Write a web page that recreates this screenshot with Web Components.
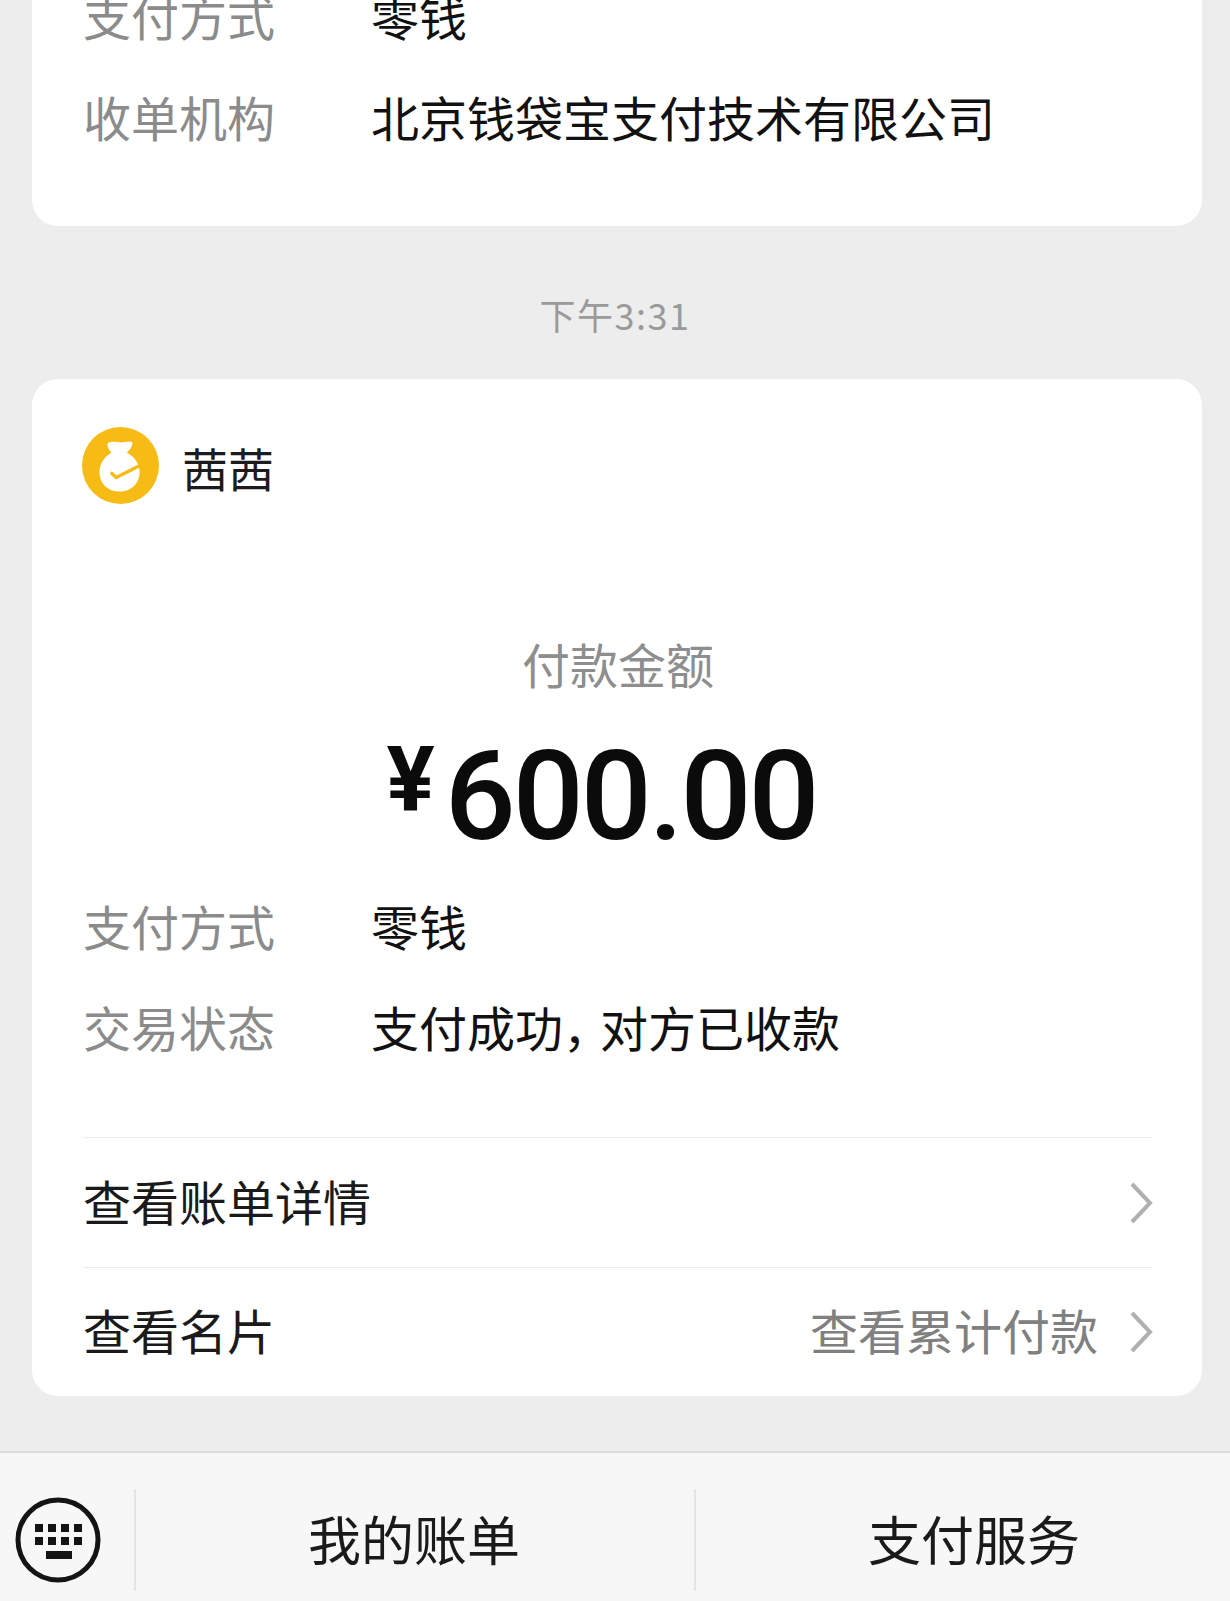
<!doctype html>
<html lang="zh">
<head>
<meta charset="utf-8">
<title>微信支付</title>
<style>
  html, body { margin: 0; padding: 0; background: #ededed; }
  body { font-family: "Noto Sans CJK SC", "Noto Sans", sans-serif; }
</style>
</head>
<body>
<pay-page>
  <pay-card style="margin-top:-33px;padding-bottom:57px">
    <info-row label="支付方式">零钱</info-row>
    <info-row label="收单机构">北京钱袋宝支付技术有限公司</info-row>
  </pay-card>
  <time-stamp>下午3:31</time-stamp>
  <pay-card>
    <payer-head name="茜茜"></payer-head>
    <pay-amount label="付款金额" value="600.00"></pay-amount>
    <info-row label="支付方式">零钱</info-row>
    <info-row label="交易状态">支付成功<span style="letter-spacing:-11px">，</span>对方已收款</info-row>
    <link-row style="margin-top:58px;--row-h:129px">查看账单详情</link-row>
    <link-row extra="查看累计付款" style="--row-h:128px">查看名片</link-row>
  </pay-card>
  <menu-bar>
    <menu-item>我的账单</menu-item>
    <menu-item>支付服务</menu-item>
  </menu-bar>
</pay-page>

<script>
class PayPage extends HTMLElement {
  constructor() {
    super()
    this.attachShadow({ mode: 'open' })
    this.shadowRoot.innerHTML = /*html*/ `
      <style>
        :host { display: flex; flex-direction: column; height: 1601px; overflow: hidden; background: #ededed; }
      </style>
      <slot></slot>
    `
  }
}

class PayCard extends HTMLElement {
  constructor() {
    super()
    this.attachShadow({ mode: 'open' })
    this.shadowRoot.innerHTML = /*html*/ `
      <style>
        :host { display: block; flex: none; margin: 0 28px 0 32px; padding: 0 49px 0 51px; background: #fff; border-radius: 26px; }
      </style>
      <slot></slot>
    `
  }
}

class InfoRow extends HTMLElement {
  constructor() {
    super()
    this.attachShadow({ mode: 'open' })
  }
  connectedCallback() {
    this.shadowRoot.innerHTML = /*html*/ `
      <style>
        :host { display: flex; align-items: center; height: 101px; padding-bottom: 6px; box-sizing: border-box; font-size: 48px; color: #111; }
        .label { flex: none; width: 288px; color: #8b8b8b; }
      </style>
      <span class="label">${this.getAttribute('label') ?? ''}</span>
      <span><slot></slot></span>
    `
  }
}

class TimeStamp extends HTMLElement {
  constructor() {
    super()
    this.attachShadow({ mode: 'open' })
    this.shadowRoot.innerHTML = /*html*/ `
      <style>
        :host { display: block; flex: none; height: 153px; padding-top: 62px; box-sizing: border-box; text-align: center; font-size: 36px; line-height: 52px; letter-spacing: 1.5px; color: #9a9a9a; }
      </style>
      <slot></slot>
    `
  }
}

class PayerHead extends HTMLElement {
  constructor() {
    super()
    this.attachShadow({ mode: 'open' })
  }
  connectedCallback() {
    this.shadowRoot.innerHTML = /*html*/ `
      <style>
        :host { display: flex; align-items: center; gap: 23px; padding-top: 48px; font-size: 46px; color: #1c1c1c; }
        svg { display: block; flex: none; margin-left: -1px; }
        span { position: relative; top: 1px; }
      </style>
      <svg width="77" height="77" viewBox="68 52 230 230">
        <circle cx="183" cy="167" r="115" fill="#f6bb14"/>
        <path fill="#fff" d="M145 100c12-7 30-2 40-2s22-6 33-1c3 10-6 22-16 32 24 12 38 34 38 58 0 34-26 58-60 58s-60-24-60-58c0-24 14-46 36-58-8-9-14-19-11-29z"/>
        <path fill="none" stroke="#f6bb14" stroke-width="10" stroke-linecap="round" stroke-linejoin="round" d="M157 190l13 13 65-33"/>
      </svg>
      <span>${this.getAttribute('name') ?? ''}</span>
    `
  }
}

class PayAmount extends HTMLElement {
  constructor() {
    super()
    this.attachShadow({ mode: 'open' })
  }
  connectedCallback() {
    this.shadowRoot.innerHTML = /*html*/ `
      <style>
        :host { display: block; padding-bottom: 15px; }
        .label { margin-top: 124px; height: 70px; line-height: 70px; text-align: center; font-size: 48px; color: #8e8e8e; padding-right: 0; }
        .sum { display: flex; justify-content: center; align-items: flex-start; height: 130px; margin-top: 34px; padding: 0 33px 0 0; font-family: Roboto, "Liberation Sans", sans-serif; font-weight: 500; color: #0b0b0b; }
        .yen { font-size: 90px; line-height: 90px; margin: 0 10px 0 0; font-weight: 700; position: relative; top: 4px; }
        .num { font-size: 125px; line-height: 130px; letter-spacing: -3px; }
      </style>
      <div class="label">${this.getAttribute('label') ?? ''}</div>
      <div class="sum"><span class="yen">¥</span><span class="num">${this.getAttribute('value') ?? ''}</span></div>
    `
  }
}

class LinkRow extends HTMLElement {
  constructor() {
    super()
    this.attachShadow({ mode: 'open' })
  }
  connectedCallback() {
    const extra = this.getAttribute('extra')
    this.shadowRoot.innerHTML = /*html*/ `
      <style>
        :host { display: flex; align-items: center; height: var(--row-h, 130px); border-top: 1px solid #ececec; font-size: 48px; color: #1a1a1a; }
        .main { flex: 1; padding-bottom: 6px; }
        .extra { color: #808080; margin-right: 32px; padding-bottom: 6px; }
        svg { display: block; flex: none; }
      </style>
      <span class="main"><slot></slot></span>
      ${extra ? `<span class="extra">${extra}</span>` : ''}
      <svg width="23" height="42" viewBox="0 0 23 42"><path d="M2 2l18 19L2 40" fill="none" stroke="#b0b0b0" stroke-width="4"/></svg>
    `
  }
}

class MenuBar extends HTMLElement {
  constructor() {
    super()
    this.attachShadow({ mode: 'open' })
    this.shadowRoot.innerHTML = /*html*/ `
      <style>
        :host { display: grid; grid-template-columns: 134px 560px 560px; flex: none; height: 150px; margin-top: 55px; border-top: 2px solid #dcdcdc; background: #f7f7f7; overflow: hidden; box-sizing: border-box; }
        .kbd { display: flex; align-items: center; padding: 26px 0 0 15px; }
        svg { display: block; }
      </style>
      <div class="kbd">
        <svg width="86" height="86" viewBox="0 0 86 86">
          <circle cx="43" cy="43" r="40" fill="none" stroke="#141414" stroke-width="5"/>
          <g fill="#141414">
            <rect x="20" y="27" width="8" height="8"/><rect x="33" y="27" width="8" height="8"/><rect x="46" y="27" width="8" height="8"/><rect x="59" y="27" width="8" height="8"/>
            <rect x="20" y="40" width="8" height="8"/><rect x="33" y="40" width="8" height="8"/><rect x="46" y="40" width="8" height="8"/><rect x="59" y="40" width="8" height="8"/>
            <rect x="31" y="54" width="26" height="8"/>
          </g>
        </svg>
      </div>
      <slot></slot>
    `
  }
}

class MenuItem extends HTMLElement {
  constructor() {
    super()
    this.attachShadow({ mode: 'open' })
    this.shadowRoot.innerHTML = /*html*/ `
      <style>
        :host { display: flex; align-items: center; justify-content: center; position: relative; padding-top: 22px; font-size: 53px; color: #1a1a1a; }
        :host::before { content: ""; position: absolute; left: 0; top: 36px; bottom: 10px; width: 2px; background: #e4e4e4; }
      </style>
      <slot></slot>
    `
  }
}

customElements.define('pay-page', PayPage)
customElements.define('pay-card', PayCard)
customElements.define('info-row', InfoRow)
customElements.define('time-stamp', TimeStamp)
customElements.define('payer-head', PayerHead)
customElements.define('pay-amount', PayAmount)
customElements.define('link-row', LinkRow)
customElements.define('menu-bar', MenuBar)
customElements.define('menu-item', MenuItem)
</script>
</body>
</html>
